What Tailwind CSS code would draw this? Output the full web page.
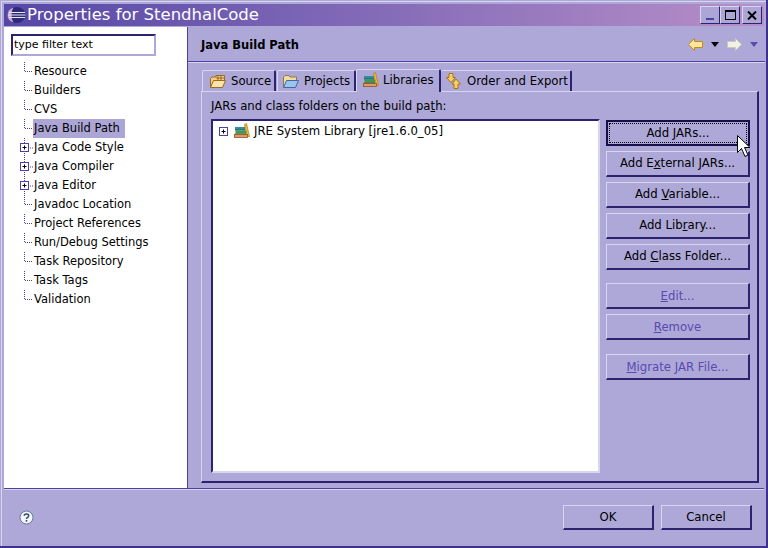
<!DOCTYPE html>
<html>
<head>
<meta charset="utf-8">
<title>Properties for StendhalCode</title>
<script src="https://cdn.jsdelivr.net/npm/@tailwindcss/browser@4"></script>
</head>
<body class="m-0 overflow-hidden bg-[#ada8d8]">
<svg class="hidden">
  <symbol id="line" viewBox="0 0 14 19"><path d="M5.500 0V9.500M6 9.500H14" stroke="#4f3fa5" stroke-dasharray="1 1" fill="none"/></symbol>
  <symbol id="last" viewBox="0 0 14 19"><path d="M5.500 0V9.500M6 9.500H14" stroke="#4f3fa5" stroke-dasharray="1 1" fill="none"/></symbol>
  <symbol id="plus" viewBox="0 0 14 19"><path d="M5.500 0V5M5.500 15V19M11 10H14" stroke="#4f3fa5" stroke-dasharray="1 1" fill="none"/><rect x="1.500" y="5.500" width="8" height="8" fill="#fff" stroke="#4f3fa5"/><path d="M3.500 9.500h4M5.500 7.500v4" stroke="#000"/></symbol>
  <symbol id="books" viewBox="0 0 16 16"><path d="M10.500 1.500L12.500 0.500L15.500 13.500H12z" fill="#f2b632" stroke="#b97d10" stroke-width=".7"/><rect x="1" y="4" width="10" height="3" fill="#2f8f9f"/><path d="M1 7H11" stroke="#25506a"/><rect x="1.500" y="7.500" width="11" height="3" fill="#3f9a4f"/><path d="M1 11H12" stroke="#2d5a2d"/><rect x="0.500" y="11.500" width="13" height="3" fill="#e09a68" stroke="#90522a" stroke-width=".8"/></symbol>
</svg>
<div class="w-[768px] h-[548px] flex flex-col bg-[#ada8d8] pt-[1px] pl-[1px] border-r-2 border-b-2 border-r-[#3d3190] border-b-[#3d3190] font-['DejaVu_Sans',sans-serif] text-[11.7px] text-black leading-[19px]">
  <div class="flex flex-col flex-1 border-t border-l border-t-[#d8d5ee] border-l-[#d8d5ee] pt-[2px] pl-[2px] pr-[2px]">
    <!-- title bar -->
    <div class="h-[22px] flex items-center bg-gradient-to-r from-[#5647a6] to-[#b88fc8] pl-[2px] pr-[2px]">
      <svg width="20" height="18" viewBox="0 0 20 18" class="shrink-0">
        <ellipse cx="10.500" cy="9" rx="9" ry="8" fill="#2e2a78"/>
        <path d="M1.500 9a9 8 0 0 1 6-7.500A12 12 0 0 0 5.500 9a12 12 0 0 0 2 7.500A9 8 0 0 1 1.500 9z" fill="#c9a8d8"/>
        <path d="M3 6.500H19M2 9H19.500M3 11.500H19" stroke="#e8e6f6" stroke-width="1"/>
      </svg>
      <span class="ml-[1px] text-[16.5px] text-white leading-[22px] whitespace-nowrap">Properties for StendhalCode</span>
      <div class="ml-auto flex items-center">
        <span class="w-[20px] h-[18px] flex items-end justify-center pb-[3px] bg-[#aca6d7] border border-t-[#d8d5ee] border-l-[#d8d5ee] border-r-[#2b2370] border-b-[#2b2370]"><span class="w-[8px] h-[2px] bg-[#4f3fa5]"></span></span>
        <span class="w-[20px] h-[18px] flex items-center justify-center bg-[#aca6d7] border border-t-[#d8d5ee] border-l-[#d8d5ee] border-r-[#2b2370] border-b-[#2b2370]"><span class="w-[11px] h-[10px] border border-t-2 border-black"></span></span>
        <span class="w-[20px] h-[18px] ml-[2px] flex items-center justify-center bg-[#aca6d7] border border-t-[#d8d5ee] border-l-[#d8d5ee] border-r-[#2b2370] border-b-[#2b2370]">
          <svg width="10" height="9" viewBox="0 0 10 9"><path d="M1 0.500L9 8.500M9 0.500L1 8.500" stroke="#000" stroke-width="2"/></svg>
        </span>
      </div>
    </div>
    <!-- main area -->
    <div class="flex mt-[1px] h-[461px]">
      <div class="w-[183px] shrink-0 bg-white pt-[7px] pl-[7px]">
        <div class="w-[145px] h-[22px] border-2 border-t-[#2b2370] border-l-[#2b2370] border-r-[#ada8d8] border-b-[#ada8d8] pl-[1px] text-[11px] leading-[18px] whitespace-nowrap">type filter text</div>
        <div class="mt-[6px] ml-[8px] text-[11.5px]">
          <div class="flex h-[19px]"><svg width="14" height="19"><use href="#line"/></svg><span class="px-[1px]">Resource</span></div>
          <div class="flex h-[19px]"><svg width="14" height="19"><use href="#line"/></svg><span class="px-[1px]">Builders</span></div>
          <div class="flex h-[19px]"><svg width="14" height="19"><use href="#line"/></svg><span class="px-[1px]">CVS</span></div>
          <div class="flex h-[19px]"><svg width="14" height="19"><use href="#line"/></svg><span class="pl-[1px] pr-[5px] bg-[#aca6d7]">Java Build Path</span></div>
          <div class="flex h-[19px]"><svg width="14" height="19"><use href="#plus"/></svg><span class="px-[1px]">Java Code Style</span></div>
          <div class="flex h-[19px]"><svg width="14" height="19"><use href="#plus"/></svg><span class="px-[1px]">Java Compiler</span></div>
          <div class="flex h-[19px]"><svg width="14" height="19"><use href="#plus"/></svg><span class="px-[1px]">Java Editor</span></div>
          <div class="flex h-[19px]"><svg width="14" height="19"><use href="#line"/></svg><span class="px-[1px]">Javadoc Location</span></div>
          <div class="flex h-[19px]"><svg width="14" height="19"><use href="#line"/></svg><span class="px-[1px]">Project References</span></div>
          <div class="flex h-[19px]"><svg width="14" height="19"><use href="#line"/></svg><span class="px-[1px]">Run/Debug Settings</span></div>
          <div class="flex h-[19px]"><svg width="14" height="19"><use href="#line"/></svg><span class="px-[1px]">Task Repository</span></div>
          <div class="flex h-[19px]"><svg width="14" height="19"><use href="#line"/></svg><span class="px-[1px]">Task Tags</span></div>
          <div class="flex h-[19px]"><svg width="14" height="19"><use href="#last"/></svg><span class="px-[1px]">Validation</span></div>
        </div>
      </div>
      <div class="flex-1 flex flex-col border-l border-l-[#4f3fa5]">
        <!-- page header -->
        <div class="h-[35px] flex items-center border-b border-b-[#4f3fa5] pl-[13px] pr-[7px] pt-[2px] shadow-[0_1px_0_#d8d5ee]">
          <span class="font-bold text-[11.5px]">Java Build Path</span>
          <div class="ml-auto flex items-center -mt-[1px]">
            <svg width="15" height="13" viewBox="0 0 15 13"><path d="M6.500 .5L.5 6.500L6.500 12.500V9.500H14.500V3.500H6.500Z" fill="#fde79a" stroke="#c98a14"/></svg>
            <svg width="8" height="5" viewBox="0 0 8 5" class="ml-[8px]"><path d="M0 0H8L4 5Z" fill="#000"/></svg>
            <svg width="15" height="13" viewBox="0 0 15 13" class="ml-[8px]"><path d="M8.500 .5L14.500 6.500L8.500 12.500V9.500H.5V3.500H8.500Z" fill="#f1f1e4" stroke="#c9c9bd"/></svg>
            <svg width="8" height="5" viewBox="0 0 8 5" class="ml-[8px]"><path d="M0 0H8L4 5Z" fill="#5a4ab0"/></svg>
          </div>
        </div>
        <!-- tabs -->
        <div class="pt-[6px] pl-[13px] pr-[6px] flex-1 flex flex-col">
          <div class="h-[23px] flex items-end pl-[1px] relative z-10 whitespace-nowrap">
            <div class="h-[21px] w-[74px] flex items-center pl-[7px] gap-[5px] border-t border-l border-r-2 border-t-[#d8d5ee] border-l-[#d8d5ee] border-r-[#2b2370] rounded-t-[2px]">
              <svg width="16" height="14" viewBox="0 0 16 14"><path d="M.5 13.500V4.500L2 3H6V1.500H14.500V8" fill="#f4cf85" stroke="#9a6a20"/><path d="M.5 13.500L3.500 6.500H15.500L12.500 13.500Z" fill="#fbe3ad" stroke="#9a6a20"/><path d="M8 1.500V6.500M11 1.500V6.500M6 4H14.500" stroke="#9a6a20"/></svg>
              <span>Source</span>
            </div>
            <div class="h-[21px] w-[79px] ml-[1px] flex items-center pl-[5px] gap-[5px] border-t border-l border-r-2 border-t-[#d8d5ee] border-l-[#d8d5ee] border-r-[#2b2370] rounded-t-[2px]">
              <svg width="16" height="13" viewBox="0 0 16 13"><path d="M.5 12.500V2L2 .5H6L7 2H13.500V5" fill="#f4dc9c" stroke="#8a7a50"/><path d="M.5 12.500L3.500 5.500H15.500L12.500 12.500Z" fill="#9cc4ec" stroke="#3f68a8"/></svg>
              <span>Projects</span>
            </div>
            <div class="h-[23px] w-[85px] flex items-center pl-[6px] gap-[4px] border-t border-l border-r-2 border-t-[#d8d5ee] border-l-[#d8d5ee] border-r-[#2b2370] rounded-t-[2px] bg-[#ada8d8] -mb-[1px] pb-[2px]">
              <svg width="16" height="16" class="shrink-0"><use href="#books"/></svg>
              <span>Libraries</span>
            </div>
            <div class="h-[21px] w-[131px] flex items-center pl-[5px] gap-[5px] border-t border-r-2 border-t-[#d8d5ee] border-r-[#2b2370] rounded-t-[2px]">
              <svg width="16" height="16" viewBox="0 0 16 16" class="shrink-0"><path d="M3 .5H7V4.500H9.500L5 9.500L.5 4.500H3Z" fill="#f7cf6a" stroke="#a8740f"/><path d="M11 15.500H8V11H6L10 6L14.500 11H12V15.500Z" fill="#f7cf6a" stroke="#a8740f"/></svg>
              <span>Order and Export</span>
            </div>
          </div>
          <!-- tab body -->
          <div class="w-[558px] h-[392px] flex flex-col border-t border-l border-r-2 border-b-2 border-t-[#d8d5ee] border-l-[#d8d5ee] border-r-[#2b2370] border-b-[#2b2370] pl-[9px] pt-[5px]">
            <div class="h-[19px] whitespace-nowrap">JARs and class folders on the build pa<u>t</u>h:</div>
            <div class="flex mt-[3px] gap-[6px]">
              <div class="w-[389px] h-[354px] bg-white border-2 border-t-[#2b2370] border-l-[#2b2370] border-r-[#d8d5ee] border-b-[#d8d5ee] pt-[1px] pl-[6px]">
                <div class="flex items-center h-[18px]">
                  <svg width="9" height="9" viewBox="0 0 9 9" class="shrink-0"><rect x=".5" y=".5" width="8" height="8" fill="#fff" stroke="#4f3fa5"/><path d="M2.500 4.500h4M4.500 2.500v4" stroke="#000"/></svg>
                  <svg width="16" height="16" class="ml-[6px]"><use href="#books"/></svg>
                  <span class="ml-[4px] whitespace-nowrap">JRE System Library [jre1.6.0_05]</span>
                </div>
              </div>
              <!-- buttons -->
              <div class="w-[144px] flex flex-col pt-[1px]">
                <button class="relative h-[26px] border-2 border-[#15104a] flex items-center justify-center p-[1px]"><span class="w-full h-full border border-dotted border-black block leading-[18px]">Add <u>J</u>ARs...</span>
                  <svg width="16" height="23" viewBox="0 0 16 23" class="absolute left-[129px] top-[13px]"><path d="M.5.5V17.500L4.500 13.500L8 21.500L11 20L7.500 12.500H13Z" fill="#fff" stroke="#000"/></svg>
                </button>
                <button class="h-[26px] mt-[5px] border border-t-[#d8d5ee] border-l-[#d8d5ee] border-r-2 border-b-2 border-r-[#2b2370] border-b-[#2b2370]">Add E<u>x</u>ternal JARs...</button>
                <button class="h-[26px] mt-[5px] border border-t-[#d8d5ee] border-l-[#d8d5ee] border-r-2 border-b-2 border-r-[#2b2370] border-b-[#2b2370]">Add <u>V</u>ariable...</button>
                <button class="h-[26px] mt-[5px] border border-t-[#d8d5ee] border-l-[#d8d5ee] border-r-2 border-b-2 border-r-[#2b2370] border-b-[#2b2370]">Add Lib<u>r</u>ary...</button>
                <button class="h-[26px] mt-[5px] border border-t-[#d8d5ee] border-l-[#d8d5ee] border-r-2 border-b-2 border-r-[#2b2370] border-b-[#2b2370]">Add <u>C</u>lass Folder...</button>
                <button class="h-[26px] mt-[13px] pt-[1px] text-[#5a4ab0] border border-t-[#d8d5ee] border-l-[#d8d5ee] border-r-2 border-b-2 border-r-[#2b2370] border-b-[#2b2370]"><u>E</u>dit...</button>
                <button class="h-[26px] mt-[5px] pt-[1px] text-[#5a4ab0] border border-t-[#d8d5ee] border-l-[#d8d5ee] border-r-2 border-b-2 border-r-[#2b2370] border-b-[#2b2370]"><u>R</u>emove</button>
                <button class="h-[26px] mt-[14px] pt-[1px] text-[#5a4ab0] border border-t-[#d8d5ee] border-l-[#d8d5ee] border-r-2 border-b-2 border-r-[#2b2370] border-b-[#2b2370]"><u>M</u>igrate JAR File...</button>
              </div>
            </div>
          </div>
        </div>
      </div>
    </div>
    <!-- footer -->
    <div class="flex-1 flex items-center border-t border-t-[#4f3fa5] pl-[15px] pr-[12px] shadow-[inset_0_1px_0_#d8d5ee]">
      <svg width="15" height="15" viewBox="0 0 15 15"><circle cx="7.500" cy="7.500" r="6.500" fill="#f4f6fb" stroke="#6a7a94"/><path d="M5.300 5.700C5.300 3.500 9.700 3.500 9.700 5.700C9.700 7.400 7.500 7.200 7.500 9" fill="none" stroke="#34507a" stroke-width="1.500"/><rect x="6.700" y="10" width="1.600" height="1.700" fill="#34507a"/></svg>
      <div class="ml-auto flex gap-[7px]">
        <button class="w-[91px] h-[25px] border border-t-[#d8d5ee] border-l-[#d8d5ee] border-r-2 border-b-2 border-r-[#2b2370] border-b-[#2b2370]">OK</button>
        <button class="w-[91px] h-[25px] border border-t-[#d8d5ee] border-l-[#d8d5ee] border-r-2 border-b-2 border-r-[#2b2370] border-b-[#2b2370]">Cancel</button>
      </div>
    </div>
  </div>
</div>
</body>
</html>
